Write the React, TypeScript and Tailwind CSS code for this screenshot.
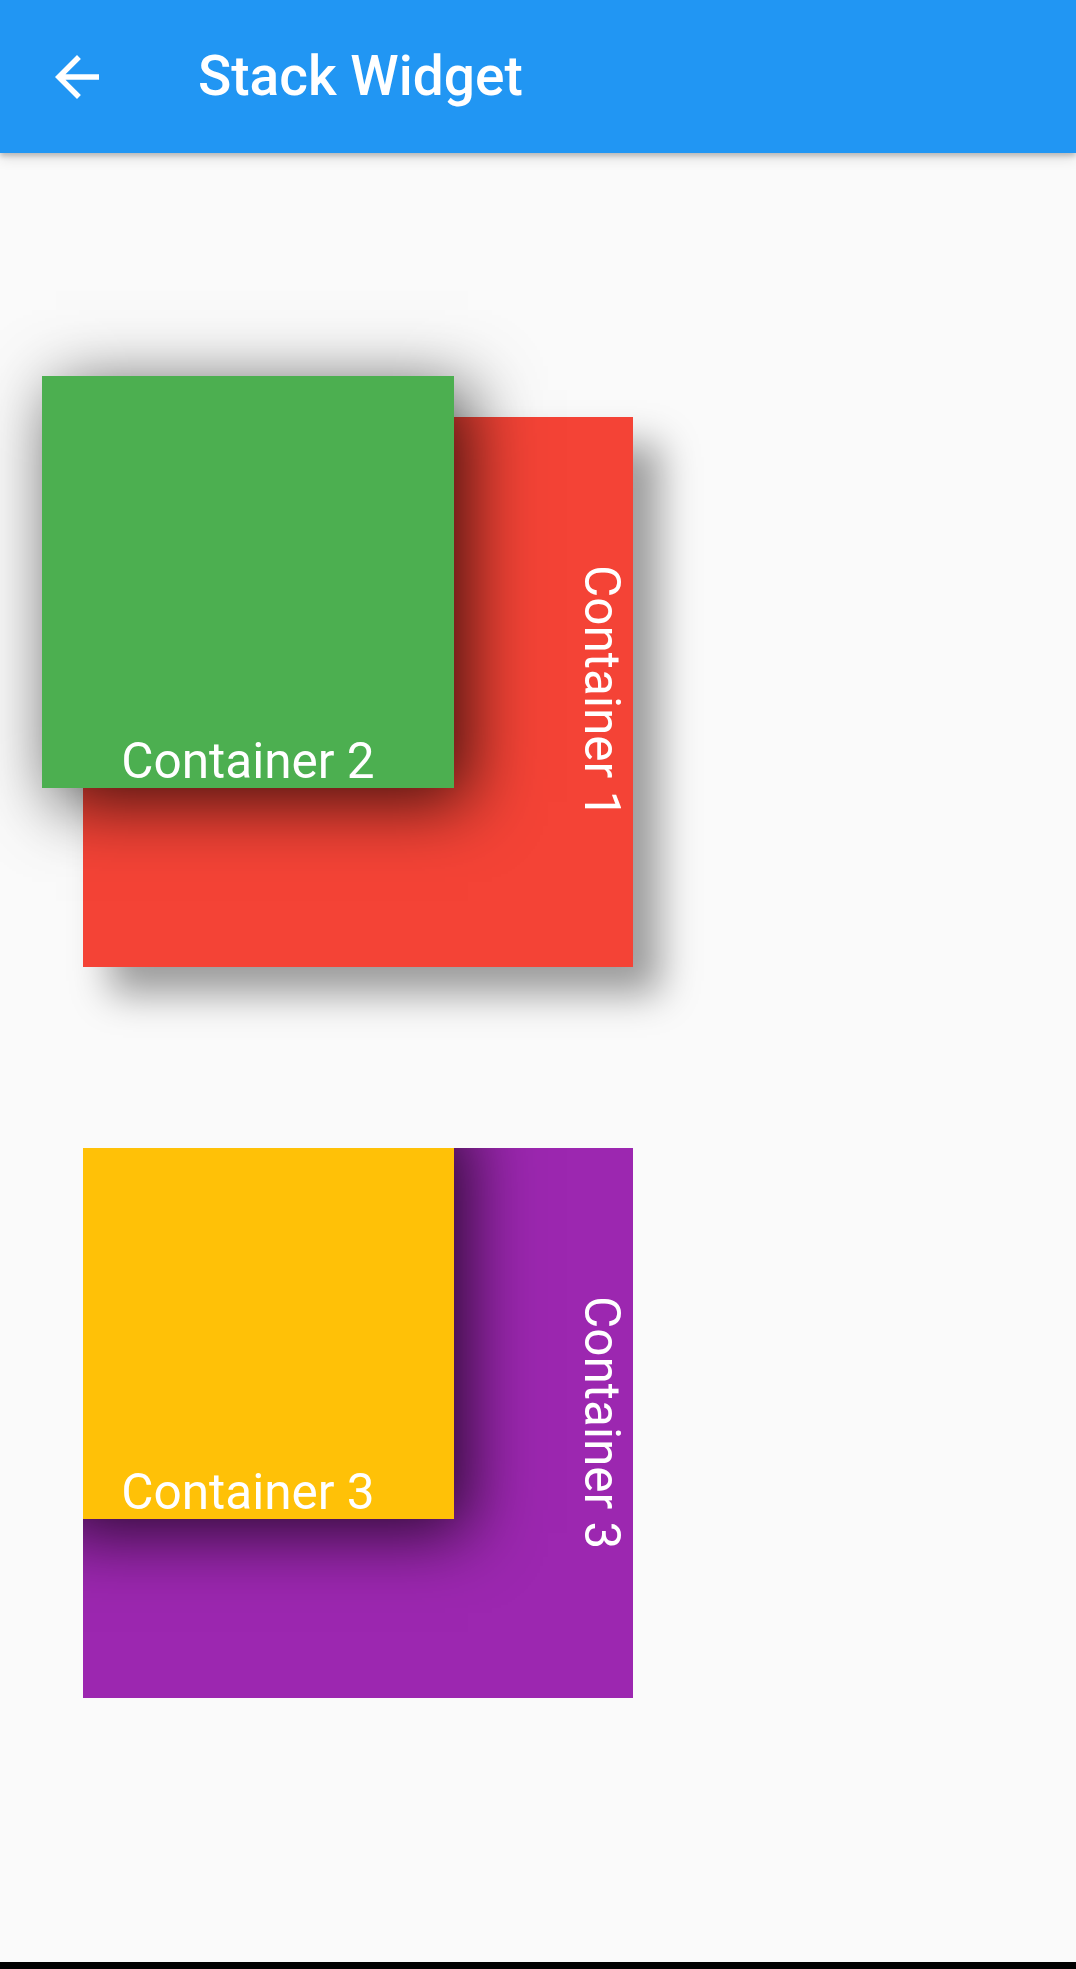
function BackArrow() {
  return (
    <svg width="66" height="66" viewBox="0 0 24 24" fill="white">
      <path d="M20 11H7.83l5.59-5.59L12 4l-8 8 8 8 1.41-1.41L7.83 13H20v-2z" />
    </svg>
  );
}

interface StackBoxProps {
  base: string;
  top: string;
  baseLabel: string;
  topLabel: string;
  clip?: boolean;
}

function StackBox({ base, top, baseLabel, topLabel, clip }: StackBoxProps) {
  return (
    <div
      className={
        clip
          ? "relative w-[550px] h-[550px] ml-[83px] overflow-hidden"
          : "relative w-[550px] h-[550px] ml-[83px]"
      }
    >
      <div
        className={
          "w-full h-full flex items-center justify-end shadow-[27px_27px_36px_rgba(0,0,0,0.38)] " +
          base
        }
      >
        <span className="[writing-mode:vertical-rl] -mr-[6px] text-white text-[49.5px] leading-normal">
          {baseLabel}
        </span>
      </div>
      <div
        className={
          "absolute -left-[41px] -top-[41px] w-[412px] h-[412px] flex items-end justify-center shadow-[14px_14px_66px_rgba(0,0,0,0.75)] " +
          top
        }
      >
        <span className="-mb-[10px] text-white text-[49.5px] leading-normal">{topLabel}</span>
      </div>
    </div>
  );
}

export default function App() {
  return (
    <div
      className="h-[1969px] w-full flex flex-col bg-[#fafafa]"
      style={{ fontFamily: "Roboto, 'Liberation Sans', sans-serif" }}
    >
      <header className="relative z-10 h-[153px] shrink-0 bg-[#2196f3] flex items-center shadow-[0_3px_5px_rgba(0,0,0,0.2),0_6px_12px_rgba(0,0,0,0.1)]">
        <div className="w-[154px] h-[153px] pl-[44px] flex items-center">
          <BackArrow />
        </div>
        <h1 className="-ml-[110px] pl-[154px] text-white text-[55px] font-medium leading-normal">
          Stack Widget
        </h1>
      </header>
      <main className="flex-1 flex flex-col justify-center gap-[181px]">
        <StackBox
          base="bg-[#f44336]"
          top="bg-[#4caf50]"
          baseLabel="Container 1"
          topLabel="Container 2"
        />
        <StackBox
          base="bg-[#9c27b0]"
          top="bg-[#ffc107]"
          baseLabel="Container 3"
          topLabel="Container 3"
          clip
        />
      </main>
      <div className="h-[7px] shrink-0 bg-black" />
    </div>
  );
}
